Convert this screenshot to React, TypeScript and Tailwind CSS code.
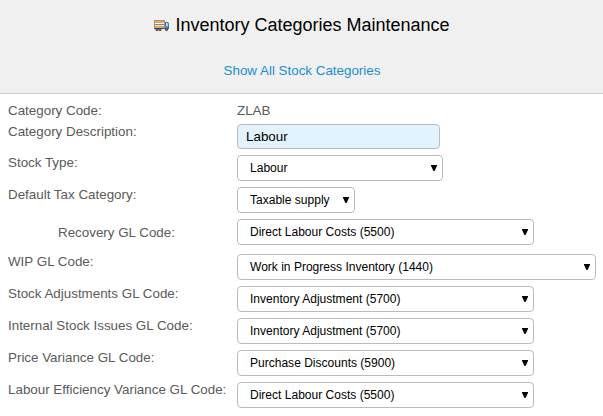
import React from "react";

type Field = {
  label: string;
  value: string;
  width: string;
  row: string;
  indent?: boolean;
};

const fields: Field[] = [
  { label: "Stock Type:", value: "Labour", width: "w-[206px]", row: "h-8" },
  { label: "Default Tax Category:", value: "Taxable supply", width: "w-[118px]", row: "h-8" },
  { label: "Recovery GL Code:", value: "Direct Labour Costs (5500)", width: "w-[297px]", row: "h-[35px]", indent: true },
  { label: "WIP GL Code:", value: "Work in Progress Inventory (1440)", width: "w-[359px]", row: "h-8" },
  { label: "Stock Adjustments GL Code:", value: "Inventory Adjustment (5700)", width: "w-[297px]", row: "h-8" },
  { label: "Internal Stock Issues GL Code:", value: "Inventory Adjustment (5700)", width: "w-[297px]", row: "h-8" },
  { label: "Price Variance GL Code:", value: "Purchase Discounts (5900)", width: "w-[297px]", row: "h-8" },
  { label: "Labour Efficiency Variance GL Code:", value: "Direct Labour Costs (5500)", width: "w-[297px]", row: "h-8" },
];

function TruckIcon() {
  return (
    <svg width="15" height="16" viewBox="0 0 15 16" aria-hidden="true">
      <rect x="0" y="3" width="11" height="9" fill="#c08a50" />
      <rect x="1" y="4" width="9" height="7" fill="#dda968" />
      <rect x="1" y="6" width="9" height="1" fill="#f7f3ea" />
      <rect x="1" y="7" width="9" height="1" fill="#4d94d4" />
      <rect x="1" y="8" width="9" height="1" fill="#f0e0c4" />
      <path d="M11 5h2.5q1 0 1.2 1L15 8v4h-4z" fill="#3870c4" />
      <path d="M12 6h1.5l.7 3H12z" fill="#c3def7" />
      <rect x="11" y="9" width="3" height="2" fill="#4f8be0" />
      <rect x="0" y="11" width="15" height="1" fill="#55504e" />
      <circle cx="3" cy="12.4" r="1.5" fill="#42464d" />
      <circle cx="6" cy="12.4" r="1.5" fill="#42464d" />
      <circle cx="12.5" cy="12.4" r="1.5" fill="#42464d" />
      <circle cx="3" cy="12.4" r="0.5" fill="#8a8e95" />
      <circle cx="6" cy="12.4" r="0.5" fill="#8a8e95" />
      <circle cx="12.5" cy="12.4" r="0.5" fill="#8a8e95" />
    </svg>
  );
}

function SelectBox({ value, width }: { value: string; width: string }) {
  return (
    <button
      type="button"
      className={`flex h-[26px] items-center justify-between rounded-[4px] border border-[#bbb] bg-white pl-3 pr-[5px] text-[12.045px] leading-4 text-black ${width}`}
    >
      <span className="whitespace-nowrap">{value}</span>
      <svg width="6" height="6" viewBox="0 0 6 6" aria-hidden="true">
        <path d="M0 0h6v.8L3.6 6H2.4L0 .8z" fill="#000" />
      </svg>
    </button>
  );
}

export default function App() {
  return (
    <div className="h-[416px] w-[603px] overflow-hidden bg-white font-['Liberation_Sans',Arial,sans-serif] text-[13.38px] leading-4 text-[#5a5a5a]">
      <header className="flex h-[94px] flex-col items-center border-b border-[#ccc] bg-[#f0f0f0]">
        <h1 className="mt-[14px] flex h-[22px] items-center gap-[6px] pl-px text-[18px] leading-[22px] text-black">
          <TruckIcon />
          <span>Inventory Categories Maintenance</span>
        </h1>
        <a href="#" className="mt-[27px] pl-px text-[#1a8fd0]">Show All Stock Categories</a>
      </header>
      <main className="pl-2 pt-[9px]">
        <div className="flex h-[21px]">
          <div className="w-[229px]">Category Code:</div>
          <div>ZLAB</div>
        </div>
        <div className="flex h-[31px]">
          <label htmlFor="description" className="w-[229px]">Category Description:</label>
          <input
            id="description"
            defaultValue="Labour"
            className="h-[25px] w-[203px] rounded-[4px] border border-[#bbb] bg-[#e0f3ff] px-2 text-[13.38px] text-black outline-none"
          />
        </div>
        {fields.map((field) => (
          <div key={field.label} className={`flex ${field.row}`}>
            <div className={`w-[229px] shrink-0 whitespace-nowrap ${field.indent ? "pl-[50px] pt-[6px]" : ""}`}>
              {field.label}
            </div>
            <SelectBox value={field.value} width={field.width} />
          </div>
        ))}
      </main>
    </div>
  );
}
